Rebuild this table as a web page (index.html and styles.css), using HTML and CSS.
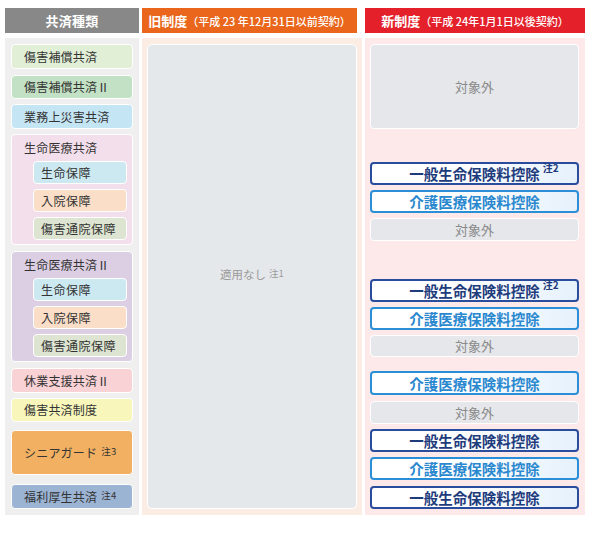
FILE: index.html
```html
<!DOCTYPE html>
<html lang="ja">
<head>
<meta charset="utf-8">
<link rel="stylesheet" href="styles.css">
</head>
<body>
<div class="table">
  <div class="col col-kind">
    <div class="head head-kind">共済種類</div>
    <div class="body body-kind">
      <div class="item c-green1">傷害補償共済</div>
      <div class="item c-green2 mt1">傷害補償共済Ⅱ</div>
      <div class="item c-blue">業務上災害共済</div>
      <div class="group c-pink">
        <div class="group-title">生命医療共済</div>
        <div class="sub s-blue">生命保障</div>
        <div class="sub s-peach">入院保障</div>
        <div class="sub s-sage">傷害通院保障</div>
      </div>
      <div class="group c-purple mt1">
        <div class="group-title">生命医療共済Ⅱ</div>
        <div class="sub s-blue">生命保障</div>
        <div class="sub s-peach">入院保障</div>
        <div class="sub s-sage">傷害通院保障</div>
      </div>
      <div class="item c-rose mt1">休業支援共済Ⅱ</div>
      <div class="item c-yellow">傷害共済制度</div>
      <div class="item item-tall c-orange mt3">シニアガード<span class="note">注3</span></div>
      <div class="item c-steel mt4">福利厚生共済<span class="note">注4</span></div>
    </div>
  </div>
  <div class="col col-old">
    <div class="head head-old">旧制度<span class="head-sub">（平成 23 年12月31日以前契約）</span></div>
    <div class="body body-old">
      <div class="na-box">適用なし<span class="note">注1</span></div>
    </div>
  </div>
  <div class="col col-new">
    <div class="head head-new">新制度<span class="head-sub">（平成 24年1月1日以後契約）</span></div>
    <div class="body body-new">
      <div class="out out-big">対象外</div>
      <div class="ded general mt28"><span class="ded-text">一般生命保険料控除<span class="ded-note">注2</span></span></div>
      <div class="ded care"><span class="ded-text">介護医療保険料控除</span></div>
      <div class="out">対象外</div>
      <div class="ded general mt33"><span class="ded-text">一般生命保険料控除<span class="ded-note">注2</span></span></div>
      <div class="ded care"><span class="ded-text">介護医療保険料控除</span></div>
      <div class="out">対象外</div>
      <div class="ded care ded-24 mt9"><span class="ded-text">介護医療保険料控除</span></div>
      <div class="out mt1">対象外</div>
      <div class="ded general"><span class="ded-text">一般生命保険料控除</span></div>
      <div class="ded care"><span class="ded-text">介護医療保険料控除</span></div>
      <div class="ded general mt1"><span class="ded-text">一般生命保険料控除</span></div>
    </div>
  </div>
</div>
</body>
</html>
```
FILE: styles.css
```css
* { box-sizing: border-box; }
body {
  margin: 0;
  background: #fff;
  font-family: "Noto Sans CJK JP", "Noto Sans", sans-serif;
  color: #333;
}
.table {
  display: flex;
  gap: 3px;
  padding: 8px 5px 0;
}
.col {
  display: flex;
  flex-direction: column;
  gap: 5px;
}
.col-kind { width: 134px; }
.col-old, .col-new { width: 220px; }

.head {
  height: 25px;
  display: flex;
  align-items: center;
  justify-content: center;
  color: #fff;
  font-weight: bold;
  font-size: 13px;
  white-space: nowrap;
}
.head-kind { background: #888888; font-size: 13px; letter-spacing: 0.3px; }
.head-old { background: #e9661c; margin-right: 5px; }
.head-new { background: #e4212b; }
.head-sub {
  font-size: 11px;
  letter-spacing: 0;
  font-weight: 500;
}

.body {
  height: 477px;
  display: flex;
  flex-direction: column;
  gap: 5px;
  padding: 6px;
}
.body-kind { background: #efefef; }
.body-old { background: #fcede4; padding: 6px 5px; }
.body-new { background: #fde9e9; padding: 6px 6px 6px 5px; }

.mt1 { margin-top: 1px; }
.mt3 { margin-top: 3px; }
.mt4 { margin-top: 4px; }
.mt9 { margin-top: 9px; }
.mt28 { margin-top: 28px; }
.mt33 { margin-top: 33px; }

.item {
  height: 25px;
  border: 1px solid #fff;
  border-radius: 4px;
  padding-left: 12px;
  display: flex;
  align-items: center;
  font-size: 12px;
  letter-spacing: 0.2px;
  color: #333;
}
.item-tall { height: 46px; }
.note {
  font-size: 9.5px;
  margin-left: 4px;
  position: relative;
  top: -2px;
}
.c-green1 { background: #e2efd7; }
.c-green2 { background: #c3e1c4; }
.c-blue { background: #c4e5f3; }
.c-pink { background: #f3dfeb; }
.c-purple { background: #dccfe4; }
.c-rose { background: #f9d2d6; }
.c-yellow { background: #f8f6bb; }
.c-orange { background: #f1b062; }
.c-steel { background: #9cb4d4; }

.group {
  border: 1px solid #fff;
  border-radius: 4px;
  padding: 0 5px 4px 12px;
  display: flex;
  flex-direction: column;
  gap: 5px;
}
.group-title {
  height: 26px;
  margin-bottom: -5px;
  display: flex;
  align-items: center;
  font-size: 12px;
  letter-spacing: 0.2px;
  padding-bottom: 1px;
}
.sub {
  height: 23px;
  margin-left: 9px;
  border: 1px solid #fff;
  border-radius: 4px;
  padding-left: 7px;
  display: flex;
  align-items: center;
  font-size: 12px;
  letter-spacing: 0.5px;
}
.s-blue { background: #cce8f1; }
.s-peach { background: #fadec8; }
.s-sage { background: #dde4d1; }

.na-box {
  flex: 1;
  background: #e5e8eb;
  border: 1px solid #fff;
  border-radius: 5px;
  display: flex;
  align-items: center;
  justify-content: center;
  padding-bottom: 6px;
  font-size: 11.5px;
  color: #9a9a9a;
}
.na-box .note { margin-left: 3px; top: -1px; font-size: 9.5px; }

.out {
  height: 23px;
  background: #e5e7ea;
  border: 1px solid #fff;
  border-radius: 4px;
  display: flex;
  align-items: center;
  justify-content: center;
  font-size: 13px;
  color: #8a8a8a;
}
.out-big { height: 86px; }

.ded {
  height: 23px;
  border: 2px solid;
  border-radius: 4px;
  display: flex;
  align-items: center;
  justify-content: center;
  font-size: 14.5px;
  font-weight: bold;
  background: linear-gradient(to right, #ffffff 35%, #e6f1fc 100%);
}
.ded-24 { height: 24px; }
.general { border-color: #2a4c9c; color: #1e3b7c; }
.care { border-color: #2b8fd8; color: #2a88cf; }
.ded-text { position: relative; }
.ded-note {
  position: absolute;
  left: 100%;
  top: -3px;
  margin-left: 3px;
  font-size: 10px;
  font-weight: bold;
  white-space: nowrap;
}
```
